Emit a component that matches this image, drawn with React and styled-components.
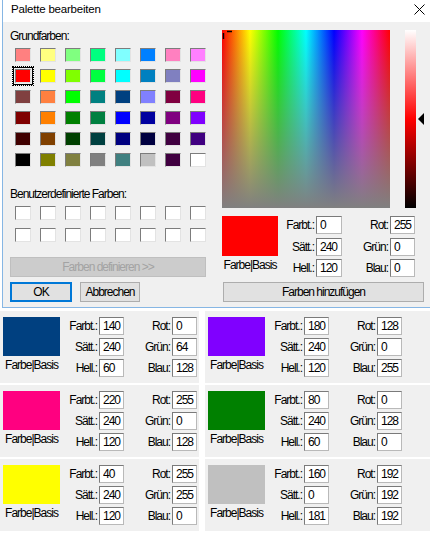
import React from "react";
import styled, { createGlobalStyle } from "styled-components";

const GlobalStyle = createGlobalStyle`
  html, body {
    margin: 0;
    padding: 0;
    background: #fff;
  }
  body {
    font-family: "Liberation Sans", Arial, sans-serif;
    font-size: 12px;
    letter-spacing: -1px;
    color: #000;
  }
`;

// standard 48 basic colours of the picker
const BASIC = [
  ["#ff8080", "#ffff80", "#80ff80", "#00ff80", "#80ffff", "#0080ff", "#ff80c0", "#ff80ff"],
  ["#ff0000", "#ffff00", "#80ff00", "#00ff40", "#00ffff", "#0080c0", "#8080c0", "#ff00ff"],
  ["#804040", "#ff8040", "#00ff00", "#008080", "#004080", "#8080ff", "#800040", "#ff0080"],
  ["#800000", "#ff8000", "#008000", "#008040", "#0000ff", "#0000a0", "#800080", "#8000ff"],
  ["#400000", "#804000", "#004000", "#004040", "#000080", "#000040", "#400040", "#400080"],
  ["#000000", "#808000", "#808040", "#808080", "#408080", "#c0c0c0", "#400040", "#ffffff"],
];

const SAVED = [
  { color: "#004080", h: 140, s: 240, l: 60, r: 0, g: 64, b: 128 },
  { color: "#8000ff", h: 180, s: 240, l: 120, r: 128, g: 0, b: 255 },
  { color: "#ff0080", h: 220, s: 240, l: 120, r: 255, g: 0, b: 128 },
  { color: "#008000", h: 80, s: 240, l: 60, r: 0, g: 128, b: 0 },
  { color: "#ffff00", h: 40, s: 240, l: 120, r: 255, g: 255, b: 0 },
  { color: "#c0c0c0", h: 160, s: 0, l: 181, r: 192, g: 192, b: 192 },
];

function ColorValues({ item, cols, gap }) {
  return (
    <ValuesGrid $cols={cols} $gap={gap}>
      <Preview $color={item.color} />
      <Caption>Farbe|Basis</Caption>
      <FieldLabel>Farbt.:</FieldLabel>
      <Field readOnly value={item.h} />
      <FieldLabel>Rot:</FieldLabel>
      <Field readOnly value={item.r} />
      <FieldLabel>Sätt.:</FieldLabel>
      <Field readOnly value={item.s} />
      <FieldLabel>Grün:</FieldLabel>
      <Field readOnly value={item.g} />
      <FieldLabel>Hell.:</FieldLabel>
      <Field readOnly value={item.l} />
      <FieldLabel>Blau:</FieldLabel>
      <Field readOnly value={item.b} />
    </ValuesGrid>
  );
}

export default function App() {
  const current = { color: "#ff0000", h: 0, s: 240, l: 120, r: 255, g: 0, b: 0 };

  return (
    <Page>
      <GlobalStyle />
      <Dialog>
        <TitleBar>
          <Title>Palette bearbeiten</Title>
          <svg width="11" height="11" viewBox="0 0 11 11">
            <path d="M0.5 0.5 L10.5 10.5 M10.5 0.5 L0.5 10.5" stroke="#000" strokeWidth="1" />
          </svg>
        </TitleBar>
        <Body>
          <LeftPane>
            <SectionLabel $top={7}>Grundfarben:</SectionLabel>
            <SwatchGrid $row={21}>
              {BASIC.flat().map((c, i) => (
                <Cell key={i}>
                  <Swatch $color={c} $selected={i === 8} />
                </Cell>
              ))}
            </SwatchGrid>
            <SectionLabel $top={17}>Benutzerdefinierte Farben:</SectionLabel>
            <SwatchGrid $row={22}>
              {Array.from({ length: 16 }).map((_, i) => (
                <Cell key={i}>
                  <Swatch $color="#fff" />
                </Cell>
              ))}
            </SwatchGrid>
            <DefineButton disabled>Farben definieren &gt;&gt;</DefineButton>
            <ButtonRow>
              <Button $w={62} $primary>OK</Button>
              <Button $w={60}>Abbrechen</Button>
            </ButtonRow>
          </LeftPane>

          <RightPane>
            <PickerRow>
              <Spectrum>
                <svg width="12" height="10" viewBox="0 0 12 10">
                  <path d="M5 1.5 H10 M1.5 3 V9" stroke="#000" strokeWidth="1.4" />
                </svg>
              </Spectrum>
              <LumTrack>
                <LumArrow width="6" height="12" viewBox="0 0 6 12">
                  <path d="M0 6 L6 0 L6 12 Z" fill="#000" />
                </LumArrow>
              </LumTrack>
            </PickerRow>
            <ColorValues item={current} cols="56px 38px 26px 48px 25px" gap={3.5} />
            <AddButton>Farben hinzufügen</AddButton>
          </RightPane>
        </Body>
      </Dialog>

      <CardGrid>
        {SAVED.map((item, i) => (
          <Card key={i}>
            <ColorValues item={item} cols="57px 39px 25px 48px 25px" gap={3} />
          </Card>
        ))}
      </CardGrid>
    </Page>
  );
}

const Page = styled.div`
  width: 430px;
  height: 537px;
  overflow: hidden;
  padding-left: 2px;
  box-sizing: border-box;
  background: #fff;
`;

const Dialog = styled.div`
  width: 440px;
  background: #f0f0f0;
  border-left: 1px solid #86b6e4;
  border-bottom: 1px solid #86b6e4;
`;

const TitleBar = styled.div`
  height: 22px;
  box-sizing: border-box;
  padding: 0 18px 4px 8px;
  background: #fff;
  display: flex;
  align-items: center;
  justify-content: space-between;
`;

const Title = styled.span`
  font-size: 11.5px;
  letter-spacing: -0.2px;
`;

const Body = styled.div`
  display: flex;
  padding: 0 0 5px 7px;
`;

const LeftPane = styled.div`
  width: 200px;
  display: flex;
  flex-direction: column;
`;

const SectionLabel = styled.div`
  line-height: 14px;
  margin-top: ${p => p.$top}px;
  margin-bottom: 1px;
`;

const SwatchGrid = styled.div`
  display: grid;
  grid-template-columns: repeat(8, 25px);
  grid-auto-rows: ${p => p.$row}px;
`;

const Cell = styled.div`
  display: flex;
  align-items: center;
  justify-content: center;
`;

const Swatch = styled.div`
  width: 16px;
  height: 14px;
  box-sizing: border-box;
  background: ${p => p.$color};
  border: 1px solid;
  border-color: #7c7c7c #e3e3e3 #e3e3e3 #7c7c7c;
  ${p =>
    p.$selected &&
    `
    box-shadow: 0 0 0 1px #f0f0f0, 0 0 0 2px #000;
    outline: 1px dotted #000;
    outline-offset: 2px;
  `}
`;

const DefineButton = styled.button`
  margin-top: 11px;
  width: 196px;
  height: 20px;
  padding: 0;
  font: inherit;
  letter-spacing: inherit;
  color: #a3a3a3;
  background: #cccccc;
  border: 1px solid #bfbfbf;
`;

const ButtonRow = styled.div`
  display: flex;
  gap: 8px;
  margin-top: 5px;
`;

const Button = styled.button`
  width: ${p => p.$w}px;
  height: 20px;
  padding: 0;
  font: inherit;
  letter-spacing: inherit;
  color: #000;
  background: #e1e1e1;
  border: 1px solid ${p => (p.$primary ? "#0078d7" : "#adadad")};
  box-shadow: ${p => (p.$primary ? "inset 0 0 0 1px #0078d7" : "none")};
`;

const RightPane = styled.div`
  margin-left: 12px;
  padding-top: 8px;
  display: flex;
  flex-direction: column;
`;

const PickerRow = styled.div`
  display: flex;
  margin-bottom: 8px;
`;

const Spectrum = styled.div`
  position: relative;
  width: 168px;
  height: 178px;
  background:
    linear-gradient(to bottom, rgba(128, 128, 128, 0), #808080),
    linear-gradient(
      to right,
      #ff0000 0%,
      #ffff00 16.67%,
      #00ff00 33.33%,
      #00ffff 50%,
      #0000ff 66.67%,
      #ff00ff 83.33%,
      #ff0000 100%
    );
  svg {
    position: absolute;
    left: 0;
    top: 0;
  }
`;

const LumTrack = styled.div`
  position: relative;
  margin-left: 15px;
  width: 11px;
  height: 178px;
  background: linear-gradient(to bottom, #ffffff 0%, #ff0000 50%, #000000 100%);
`;

const LumArrow = styled.svg`
  position: absolute;
  left: 13px;
  top: 83px;
`;

const ValuesGrid = styled.div`
  display: grid;
  grid-template-columns: ${p => p.$cols};
  grid-auto-rows: 18px;
  row-gap: ${p => p.$gap}px;
`;

const Preview = styled.div`
  grid-column: 1;
  grid-row: 1 / 3;
  background: ${p => p.$color};
`;

const Caption = styled.div`
  grid-column: 1;
  grid-row: 3;
  text-align: center;
  line-height: 12px;
  white-space: nowrap;
`;

const FieldLabel = styled.div`
  text-align: right;
  padding-right: 2px;
  line-height: 18px;
  white-space: nowrap;
`;

const Field = styled.input`
  width: 100%;
  height: 18px;
  box-sizing: border-box;
  margin: 0;
  padding: 0 0 0 3px;
  font: inherit;
  letter-spacing: inherit;
  color: #000;
  background: #fff;
  border: 1px solid;
  border-color: #7a7a7a #b9b9b9 #b9b9b9 #7a7a7a;
  outline: none;
`;

const AddButton = styled.button`
  margin-top: 5px;
  margin-left: 1px;
  width: 201px;
  height: 20px;
  padding: 0;
  font: inherit;
  letter-spacing: inherit;
  color: #000;
  background: #e1e1e1;
  border: 1px solid #adadad;
`;

const CardGrid = styled.div`
  display: grid;
  grid-template-columns: 199px 1fr;
  column-gap: 6px;
  row-gap: 2px;
  margin-top: 3px;
  margin-left: -2px;
`;

const Card = styled.div`
  background: #f0f0f0;
  padding: 6px 2px 6px 3px;
`;
